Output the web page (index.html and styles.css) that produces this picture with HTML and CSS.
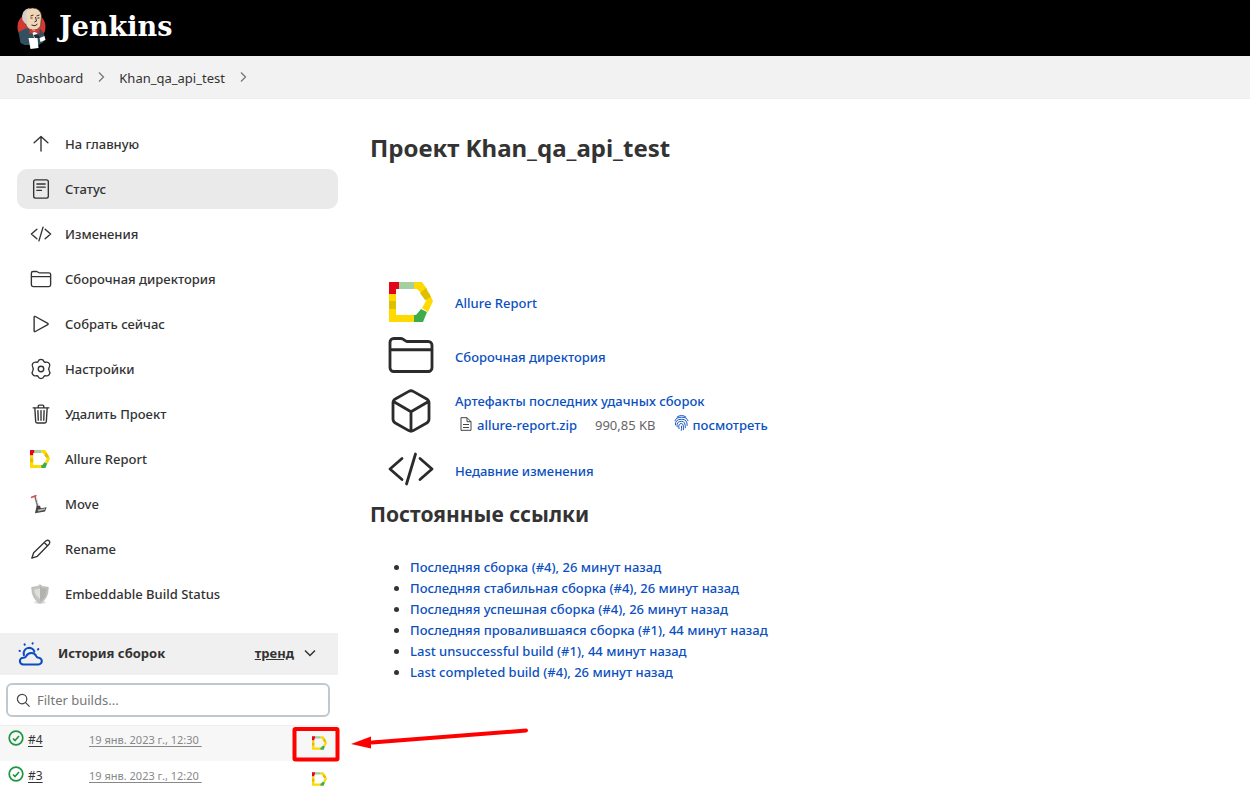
FILE: index.html
```html
<!DOCTYPE html>
<html lang="ru">
<head>
<meta charset="utf-8">
<meta name="viewport" content="width=device-width, initial-scale=1">
<title>Khan_qa_api_test [Jenkins]</title>
<link rel="stylesheet" href="styles.css">
</head>
<body>
<svg class="sprite" aria-hidden="true">
  <symbol id="allure" viewBox="0 0 44 40">
    <path fill="#ffd900" d="M0 12h7v21h20v7H0zM25 0h8l5 7-6 4-4-4h-3zM35 14l5-3 4 8-5 11-6-4 4-7z"/>
    <path fill="#e3051b" d="M0 0h10v7H7v5H0z"/>
    <path fill="#a4d0a0" d="M10 0h15v7H10z"/>
    <path fill="#dfbf00" d="M0 19h7v8H0zM31 11l6-5 5 9-6 3z"/>
    <path fill="#3dac49" d="M25 33h2l5-6 6 3-4 10h-9z"/>
  </symbol>
  <symbol id="folder" viewBox="0 0 512 512">
    <path d="M440 432H72a40 40 0 01-40-40V120a40 40 0 0140-40h75.900a40 40 0 0122.200 6.700l27.800 18.600a40 40 0 0022.200 6.700H440a40 40 0 0140 40v240a40 40 0 01-40 40zM32 200h448"/>
  </symbol>
  <symbol id="code" viewBox="0 0 512 512">
    <path d="M160 368L32 256l128-112M352 368l128-112-128-112M304 96l-96 320"/>
  </symbol>
  <symbol id="check" viewBox="0 0 16 16">
    <circle cx="8" cy="8" r="6.800"/><path d="M5 8.500l2 2 4-4.500"/>
  </symbol>
</svg>

<header class="top">
  <a class="brand" href="#">
    <svg class="butler" viewBox="0 0 30 42" aria-hidden="true">
      <circle cx="15" cy="20" r="14" fill="#d33833"/>
      <path fill="#335061" d="M2 25l8-4 7 4 7-3 4 6-1 7-5 3H8l-4-2z"/>
      <path fill="#f0d6b7" stroke="#3b2a20" stroke-width=".6" d="M7 9q1-8 9-8 8 0 9 8l-1 10q-3 5-8 4-6-1-7-7-2-1-2-7z"/>
      <path fill="#cfcfcf" d="M6 13q-2-10 7-12-4 4-3 8l1 6-2 2z"/>
      <path fill="none" stroke="#3b2a20" stroke-width="1" d="M14 9l3-1M20 9l3-1M19 10l1 4-2 1M15 18q4 2 6-1M14 11h2M21 11h2"/>
      <path fill="#fff" d="M15 23l5 1 2 6-4 2z"/>
      <path fill="#d33833" d="M13 22l5 2 5-2v5l-5-2-5 2z"/>
      <path fill="#1c2c38" d="M17 28l4-1 3 4-5 1z"/>
      <path fill="#fff" d="M12 31h9l1 10-8 1zM23 31l5-2 1 4-5 2z"/>
    </svg>
    <span>Jenkins</span>
  </a>
</header>

<nav class="crumbs" aria-label="Breadcrumb">
  <a href="#">Dashboard</a>
  <svg class="chev" viewBox="0 0 8 10"><path d="M2 0.500l4.500 4.500L2 9.500"/></svg>
  <a href="#">Khan_qa_api_test</a>
  <svg class="chev" viewBox="0 0 8 10"><path d="M2 0.500l4.500 4.500L2 9.500"/></svg>
</nav>

<div class="page">
  <aside class="side">
    <nav class="tasks">
      <a href="#"><svg class="ico" viewBox="0 0 512 512"><path d="M96 226L256 80l160 146M256 90v330"/></svg>На главную</a>
      <a href="#" class="active"><svg class="ico" viewBox="0 0 24 24"><g class="fine"><rect x="4" y="2" width="16" height="20" rx="2"/><path d="M7.500 6.500h9M7.500 10h9M7.500 13.500h5"/></g></svg>Статус</a>
      <a href="#"><svg class="ico"><use href="#code"/></svg>Изменения</a>
      <a href="#"><svg class="ico"><use href="#folder"/></svg>Сборочная директория</a>
      <a href="#"><svg class="ico" viewBox="0 0 512 512"><path d="M96 96v320c0 14 16 22 28 15l290-160c11-6 11-23 0-29L124 81c-12-7-28 1-28 15z"/></svg>Собрать сейчас</a>
      <a href="#"><svg class="ico" viewBox="0 0 24 24"><g class="fine"><path d="M8.800 3.700Q9.600 1.500 12 1.500t3.200 2.200q.5 1.300 1.900.9 2.400-.6 3.800 1.300 1.600 2.200.1 4.100-1.200 2 0 4 1.500 1.900-.1 4.100-1.400 1.900-3.800 1.300-1.400-.4-1.900.9-.8 2.200-3.200 2.200t-3.200-2.200q-.5-1.300-1.900-.9-2.400.6-3.800-1.300Q1.500 15.900 3 14q1.200-2 0-4-1.500-1.900.1-4.100 1.400-1.900 3.800-1.300 1.400.4 1.900-.9z"/><circle cx="12" cy="12" r="3"/></g></svg>Настройки</a>
      <a href="#"><svg class="ico" viewBox="0 0 512 512"><path d="M112 112l20 320c1 18 14 32 32 32h184c18 0 31-14 32-32l20-320M72 112h368M192 112V72a24 24 0 0124-24h80a24 24 0 0124 24v40M256 176v224M184 176l8 224M328 176l-8 224"/></svg>Удалить Проект</a>
      <a href="#"><svg class="ico plain"><use href="#allure"/></svg>Allure Report</a>
      <a href="#"><svg class="ico plain" viewBox="0 0 24 24"><path fill="none" stroke="#777" stroke-width="2" d="M6 3l4 15"/><path fill="none" stroke="#ddd" stroke-width="1" d="M8 5l3 11"/><path fill="#444" d="M8 14h4l1 3 7-1-2 5-12 2z"/><path fill="#bbb" d="M9 19l9-2v2l-8 2z"/><path fill="none" stroke="#e34a4a" stroke-width="2" d="M2 4l5-2"/></svg>Move</a>
      <a href="#"><svg class="ico" viewBox="0 0 24 24"><g class="fine"><path d="M2 22l2-6L17.500 3q2-1.300 3.500.2Q22.300 4.700 21 6.500L8 20zM15.500 5l3.500 3.500"/></g></svg>Rename</a>
      <a href="#"><svg class="ico plain" viewBox="0 0 24 24"><ellipse cx="12" cy="22" rx="7" ry="2" fill="#ddd"/><path fill="#c4c4c0" stroke="#aaa" stroke-width=".7" d="M12 1l3 2 7 1q0 14-10 19Q2 18 2 4l7-1z"/><path fill="#b2b2ae" d="M12 3l3 2 5 .5Q20 17 12 21z"/><path fill="#dededb" d="M12 5v13Q6 14 5 7l5-1z"/></svg>Embeddable Build Status</a>
    </nav>

    <section class="history">
      <div class="history-head">
        <svg class="weather" viewBox="0 0 24 24" aria-hidden="true"><path d="M5 22.500h14.500a3.200 3.200 0 00.3-6.400q-1.600-.1-2.300-1.600-1.300-3-4.800-3-3.400 0-4.800 3-.7 1.500-2.900 1.600a3.200 3.200 0 000 6.400zM5.700 13.500a5.200 5.200 0 1110-3.300"/><path d="M6.500 3.500l-.2-.3M14 2.500l.1-.4M1.800 9.500l-.3-.1M19.200 8l.3-.2"/></svg>
        <h2>История сборок</h2>
        <a href="#">тренд</a>
        <button type="button" aria-label="Свернуть"><svg viewBox="0 0 12 8"><path d="M1 1.500l5 5 5-5"/></svg></button>
      </div>
      <label class="search">
        <svg viewBox="0 0 16 16" aria-hidden="true"><circle cx="6.500" cy="6.500" r="5"/><path d="M10.200 10.200l4.300 4.300"/></svg>
        <input type="text" placeholder="Filter builds..." aria-label="Filter builds">
      </label>
      <div class="builds">
        <div class="build odd">
          <svg class="ok"><use href="#check"/></svg>
          <a class="num" href="#">#4</a>
          <a class="date" href="#">19 янв. 2023 г., 12:30&nbsp;</a>
          <a class="badge" href="#" aria-label="Allure Report"><svg><use href="#allure"/></svg></a>
          <svg class="pointer" viewBox="0 0 240 38" aria-hidden="true"><rect x="4.500" y="3" width="43" height="30.500" rx="1"/><path d="M82 16.500L236 4.500"/><path class="tip" d="M61 18l20-7.500v12z"/></svg>
        </div>
        <div class="build">
          <svg class="ok"><use href="#check"/></svg>
          <a class="num" href="#">#3</a>
          <a class="date" href="#">19 янв. 2023 г., 12:20&nbsp;</a>
          <a class="badge" href="#" aria-label="Allure Report"><svg><use href="#allure"/></svg></a>
        </div>
      </div>
    </section>
  </aside>

  <main class="main">
    <h1>Проект Khan_qa_api_test</h1>
    <div class="links">
      <div class="row">
        <svg class="big allure"><use href="#allure"/></svg>
        <a href="#">Allure Report</a>
      </div>
      <div class="row">
        <svg class="big"><use href="#folder"/></svg>
        <a href="#">Сборочная директория</a>
      </div>
      <div class="row tall">
        <svg class="big" viewBox="0 0 512 512"><path d="M448 341.400V170.600A48 48 0 00423.700 129l-144-82.100a48 48 0 00-47.500 0l-144 82.100A48 48 0 0064 170.600v170.800A48 48 0 0088.300 383l144 82.100a48 48 0 0047.500 0l144-82.100a48 48 0 0024.200-41.600zM69 153.900l187 110.100 187-110.100M256 463.900V264"/></svg>
        <div>
          <a href="#">Артефакты последних удачных сборок</a>
          <div class="file">
            <svg class="doc" viewBox="0 0 12 14"><path d="M1 .7h6L11 4.700v8.600H1zM7 .7v4h4M3 7.500h6M3 10.500h6"/></svg>
            <a href="#">allure-report.zip</a>
            <span class="size">990,85 KB</span>
            <svg class="finger" viewBox="0 0 16 18"><path d="M3 2.800Q8-.8 13 2.800M1 7q1-4.200 7-4.200T15 7M1.500 11.500Q1 5 8 5q6.500 0 6 7M3.500 13.500Q2 7.200 8 7.200q4.500 0 4 7.300M5.500 15.500q-1.500-6 2.500-6 2.500 0 2 7M8 12q.3 3-.3 5.300"/></svg>
            <a href="#">посмотреть</a>
          </div>
        </div>
      </div>
      <div class="row">
        <svg class="big"><use href="#code"/></svg>
        <a href="#">Недавние изменения</a>
      </div>
    </div>
    <h2>Постоянные ссылки</h2>
    <ul class="perma">
      <li><a href="#">Последняя сборка (#4), 26 минут назад</a></li>
      <li><a href="#">Последняя стабильная сборка (#4), 26 минут назад</a></li>
      <li><a href="#">Последняя успешная сборка (#4), 26 минут назад</a></li>
      <li><a href="#">Последняя провалившаяся сборка (#1), 44 минут назад</a></li>
      <li><a href="#">Last unsuccessful build (#1), 44 минут назад</a></li>
      <li><a href="#">Last completed build (#4), 26 минут назад</a></li>
    </ul>
  </main>
</div>
</body>
</html>
```
FILE: styles.css
```css
* { box-sizing: border-box; }
body {
  margin: 0;
  background: #fff;
  color: #333;
  font: 13px/20px "Noto Sans", "Open Sans", sans-serif;
}
a { color: #0b50bf; text-decoration: none; }
svg { flex: none; }
h1, h2 { margin: 0; }
.sprite { position: absolute; width: 0; height: 0; }

.top { background: #000; height: 56px; padding: 0 16px; display: flex; align-items: center; }
.brand { display: flex; align-items: center; gap: 12px; color: #fff; font: bold 27px/32px "DejaVu Serif", serif; }
.brand span { padding-bottom: 2px; }
.butler { width: 31px; height: 42px; }

.crumbs {
  display: flex; align-items: center; gap: 14px;
  height: 43px; padding: 2px 16px 0;
  background: #f2f2f2; border-bottom: 1px solid #eee;
}
.crumbs a { color: #333; }
.chev { width: 8px; height: 10px; margin-bottom: 2px; fill: none; stroke: #777; stroke-width: 1.3; }

.page { display: grid; grid-template-columns: 338px 1fr; column-gap: 32px; }

.tasks { display: flex; flex-direction: column; gap: 5px; padding: 25px 0 0 17px; }
.tasks a {
  display: flex; align-items: center; gap: 13px;
  height: 40px; padding-left: 13px; border-radius: 10px;
  color: #333; font-weight: 500;
}
.tasks .active { background: #eaeaea; }
.ico { width: 22px; height: 22px; fill: none; stroke: #333; stroke-width: 32; stroke-linecap: round; stroke-linejoin: round; }
.fine { stroke-width: 1.5; }
.plain { stroke: none; width: 20px; height: 20px; margin-right: 2px; }

.history { margin-top: 19px; }
.history-head {
  display: flex; align-items: center;
  height: 42px; padding: 0 21px 2px 18px;
  background: #f0f0f0;
}
.history-head h2 { flex: 1; margin-left: 15px; font-size: 13px; line-height: 20px; }
.history-head a { color: #333; font-weight: 700; text-decoration: underline; }
.history-head button { display: flex; margin-left: 9px; padding: 1px; border: 0; background: none; }
.history-head button svg { width: 12px; height: 8px; fill: none; stroke: #333; stroke-width: 1.5; }
.weather { width: 25px; height: 25px; fill: none; stroke: #0b4cc2; stroke-width: 2; stroke-linecap: round; }

.search {
  display: flex; align-items: center; gap: 6px;
  margin: 8px 8px 8px 6px; height: 34px; padding: 0 8px;
  border: 2px solid #bec8d0; border-radius: 6px;
}
.search svg { width: 15px; height: 15px; fill: none; stroke: #444; stroke-width: 1.3; }
.search input { flex: 1; min-width: 0; padding: 0; border: 0; outline: 0; background: none; font: inherit; color: #333; }
.search input::placeholder { color: #777; }

.build {
  position: relative;
  display: grid; grid-template-columns: 20px 61px 1fr 15px; align-items: start;
  padding: 5px 11px 11px 8px;
  font-size: 12px;
}
.odd { background: #f7f7f7; border-top: 1px solid #f0f0f0; padding-top: 4px; }
.build:last-child { padding-bottom: 5px; }
.build a { text-decoration: underline; text-underline-offset: 2px; }
.ok { width: 16px; height: 16px; fill: none; stroke: #1e9646; stroke-width: 1.7; }
.num { color: #333; }
.build .date { color: #888; font-size: 11px; }
.badge svg { display: block; width: 15px; height: 14px; margin-top: 6px; }
.pointer { position: absolute; left: 290px; top: 0; width: 240px; height: 38px; fill: none; stroke: #f00; stroke-width: 4; stroke-linecap: round; }
.tip { fill: #f00; stroke: none; }

.main { padding-top: 33px; }
.main h1 { font-size: 24px; line-height: 32px; }
.links { margin-top: 112px; padding-left: 17px; }
.links a, .perma a { font-weight: 500; }
.row { display: flex; align-items: center; gap: 20px; min-height: 54px; }
.tall { min-height: 60px; padding-bottom: 2px; }
.big { width: 48px; height: 48px; margin-bottom: 4px; fill: none; stroke: #2b2b2b; stroke-width: 30; stroke-linecap: round; stroke-linejoin: round; }
.allure { width: 44px; height: 40px; margin: 0 2px 2px; stroke: none; }
.file { display: flex; align-items: center; padding-left: 5px; margin-top: 3px; }
.doc { width: 12px; height: 14px; margin: 0 5px 2px 0; fill: none; stroke: #444; }
.size { margin: 0 18px; color: #666; }
.finger { width: 15px; height: 18px; margin: 0 4px 4px 0; fill: none; stroke: #0b50bf; }
.main h2 { font-size: 21px; line-height: 28px; margin-top: 2px; }
.perma { margin: 29px 0 0; padding-left: 40px; line-height: 21px; }
```
